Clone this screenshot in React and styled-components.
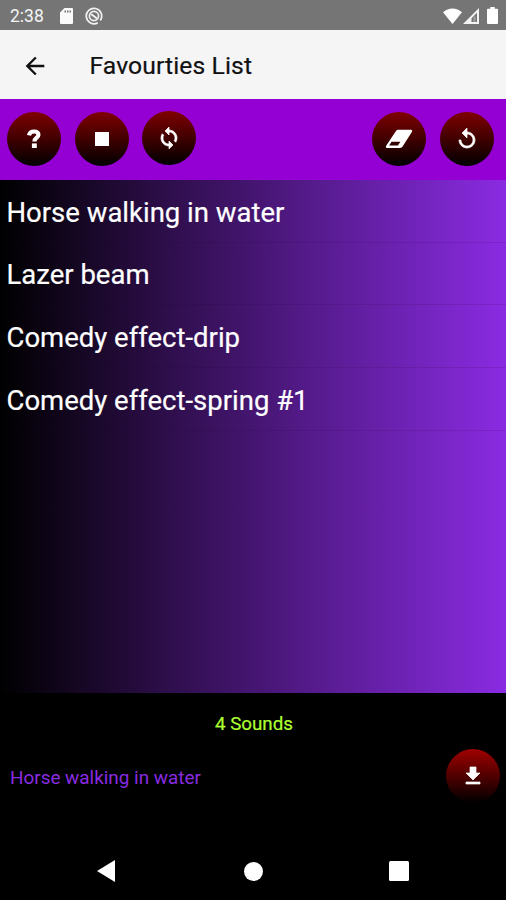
import React from 'react';
import styled, { createGlobalStyle } from 'styled-components';
import { MdArrowBack, MdDownload, MdReplay, MdSync } from 'react-icons/md';

const GlobalStyle = createGlobalStyle`
  * {
    box-sizing: border-box;
  }
  body {
    margin: 0;
    background: #000;
    font-family: Roboto, sans-serif;
  }
`;

const Screen = styled.div`
  display: flex;
  flex-direction: column;
  width: 506px;
  height: 900px;
  overflow: hidden;
  background: #000;
`;

const StatusBar = styled.div`
  display: flex;
  align-items: center;
  flex: none;
  height: 30px;
  padding: 1px 8px 0 10px;
  background: #757575;
  color: #f4f4f4;
  font-size: 17.5px;
`;

const StatusIcons = styled.div`
  display: flex;
  align-items: center;
  gap: ${props => props.gap};
  margin-left: ${props => props.offset || 'auto'};
`;

const Header = styled.header`
  display: flex;
  align-items: center;
  flex: none;
  height: 69px;
  padding: 2px 0 0 21px;
  background: #f5f5f5;
  color: #111;
`;

const Title = styled.h1`
  margin: 0 0 0 40.5px;
  font-size: 24.7px;
  font-weight: 400;
  letter-spacing: 0.1px;
  -webkit-text-stroke: 0.2px #111;
`;

const Toolbar = styled.div`
  display: flex;
  align-items: center;
  flex: none;
  gap: 13.5px;
  height: 81px;
  padding: 0 12.5px 1px 7px;
  background: #9400d3;
`;

const Spacer = styled.div`
  flex: 1;
`;

const RoundButton = styled.button`
  display: flex;
  align-items: center;
  justify-content: center;
  flex: none;
  width: 54px;
  height: 54px;
  margin: ${props => (props.raised ? '-2px 0 0' : '0')};
  padding: 0;
  border: none;
  border-radius: 50%;
  background: linear-gradient(${props => props.top || '#800000'}, #000);
  color: #fff;

  /* the md icons carry an empty bounding path, leave that one alone */
  & path[fill='none'] {
    stroke: ${props => (props.bold ? 'none' : '#fff')};
  }
  & path:not([fill='none']) {
    stroke: ${props => (props.bold ? '#fff' : 'none')};
    stroke-width: 0.7;
  }
`;

const SoundList = styled.ul`
  flex: none;
  height: 513px;
  margin: 0;
  padding: 0;
  list-style: none;
  background: linear-gradient(to right, #000, #8a2be2);
`;

const SoundRow = styled.li`
  display: flex;
  align-items: center;
  height: 62.7px;
  padding: 2.5px 6.5px 0;
  border-bottom: 1px solid rgba(30, 0, 60, 0.12);
  color: #fff;
  font-size: 27.5px;
  -webkit-text-stroke: 0.2px #fff;
`;

const Count = styled.div`
  flex: none;
  padding: 0 0 0 2px;
  height: 56px;
  line-height: 62px;
  color: #adff2f;
  font-size: 18.8px;
  text-align: center;
  -webkit-text-stroke: 0.2px #adff2f;
`;

const Player = styled.div`
  display: flex;
  align-items: center;
  justify-content: space-between;
  flex: none;
  height: 54px;
  padding: 0 6px 0 10px;
  color: #8a2be2;
  font-size: 18.9px;
`;

const TrackName = styled.span`
  padding-top: 2px;
`;

const NavBar = styled.nav`
  display: flex;
  align-items: center;
  justify-content: space-between;
  flex: none;
  height: 58px;
  margin-top: auto;
  padding: 0 97px;
`;

const HomeIcon = styled.svg`
  margin-left: 3px;
`;

const SdCardIcon = () => (
  <svg width="13" height="16" viewBox="0 0 13 16" fill="#fafafa">
    <path fillRule="evenodd" d="M4.500 0H12a1 1 0 0 1 1 1V15a1 1 0 0 1-1 1H1a1 1 0 0 1-1-1V4.500ZM4.500 2.500V4.500H6V2.500ZM7 2.500V4.500H8.500V2.500ZM9.500 2.500V4.500H11V2.500Z" />
  </svg>
);

const TrackerIcon = () => (
  <svg width="18" height="18" viewBox="0 0 18 18" fill="none" stroke="#f2f2f2">
    <path d="M15.300 13.400A7.700 7.700 0 1 0 12.800 15.700" strokeWidth="1.700" />
    <circle cx="9" cy="9" r="4.600" strokeWidth="1.700" />
    <path d="M6 7 12 11.500" strokeWidth="2" />
  </svg>
);

const WifiIcon = () => (
  <svg width="19" height="16" viewBox="0 0 19 16" fill="#fff">
    <path d="M9.500 16 0 4.300C5.500-.9 13.500-.9 19 4.300Z" />
  </svg>
);

const SignalIcon = () => (
  <svg width="16" height="16" viewBox="0 0 16 16">
    <path fillRule="evenodd" fill="#f4f4f4" d="M16 0V16H0ZM14 4.800 8.500 10.300V14H14Z" />
    <path fill="#d0d0d0" d="M10.500 9.500 12.500 7.500V14H10.500Z" opacity=".5" />
  </svg>
);

const BatteryIcon = () => (
  <svg width="11" height="17" viewBox="0 0 11 17" fill="#fff">
    <path d="M3.300 0H7.700V1.800H10A1 1 0 0 1 11 2.800V16A1 1 0 0 1 10 17H1A1 1 0 0 1 0 16V2.800A1 1 0 0 1 1 1.800H3.300Z" />
  </svg>
);

const QuestionIcon = () => (
  <svg width="14" height="20" viewBox="0 0 14 20">
    <path d="M2 6.400C2.600 3.500 4.500 2.500 7 2.500C9.800 2.500 11.400 3.900 11.400 5.900C11.400 8.800 7.500 8.600 7.500 12.500" fill="none" strokeWidth="4.200" />
    <path d="M4.900 14.400H9.800V19H4.900Z" fill="#fff" />
  </svg>
);

const StopIcon = () => (
  <svg width="14" height="14" viewBox="0 0 14 14">
    <path d="M0 0H14V14H0Z" fill="#fff" />
  </svg>
);

const EraserIcon = () => (
  <svg width="28" height="20" viewBox="0 0 28 20">
    <path
      fill="#fff"
      fillRule="evenodd"
      d="M13.200.8H26Q27.800.8 27 2.800L17.600 17.400Q16.400 19 14.600 19H2Q.2 19 1 17L10.800 2.200Q11.700.8 13.200.8ZM6.600 12.800 4.100 16.500H12.900L15.400 12.800Z"
    />
  </svg>
);

const sounds = ['Horse walking in water', 'Lazer beam', 'Comedy effect-drip', 'Comedy effect-spring #1'];

export default function App() {
  return (
    <Screen>
      <GlobalStyle />
      <StatusBar>
        2:38
        <StatusIcons gap="12px" offset="16px">
          <SdCardIcon />
          <TrackerIcon />
        </StatusIcons>
        <StatusIcons gap="8px">
          <StatusIcons gap="1px">
            <WifiIcon />
            <SignalIcon />
          </StatusIcons>
          <BatteryIcon />
        </StatusIcons>
      </StatusBar>
      <Header>
        <MdArrowBack size={28} />
        <Title>Favourties List</Title>
      </Header>
      <Toolbar>
        <RoundButton aria-label="Help">
          <QuestionIcon />
        </RoundButton>
        <RoundButton aria-label="Stop">
          <StopIcon />
        </RoundButton>
        <RoundButton bold raised aria-label="Loop">
          <MdSync size={24} />
        </RoundButton>
        <Spacer />
        <RoundButton aria-label="Erase">
          <EraserIcon />
        </RoundButton>
        <RoundButton bold aria-label="Reset">
          <MdReplay size={24} />
        </RoundButton>
      </Toolbar>
      <SoundList>
        {sounds.map(sound => (
          <SoundRow key={sound}>{sound}</SoundRow>
        ))}
      </SoundList>
      <Count>{sounds.length} Sounds</Count>
      <Player>
        <TrackName>{sounds[0]}</TrackName>
        <RoundButton bold top="#a00000" aria-label="Download">
          <MdDownload size={24} />
        </RoundButton>
      </Player>
      <NavBar>
        <svg width="18" height="22" viewBox="0 0 18 22" fill="#fff">
          <path d="M18 0V22L0 11Z" />
        </svg>
        <HomeIcon width="19" height="19" viewBox="0 0 19 19" fill="#fff">
          <circle cx="9.500" cy="9.500" r="9.500" />
        </HomeIcon>
        <svg width="20" height="20" viewBox="0 0 20 20" fill="#fff">
          <rect width="20" height="20" rx="1.500" />
        </svg>
      </NavBar>
    </Screen>
  );
}
